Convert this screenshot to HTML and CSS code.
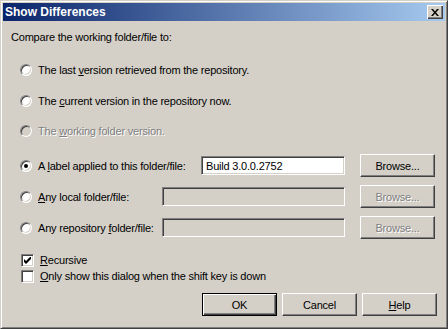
FILE: index.html
```html
<!DOCTYPE html>
<html lang="en">
<head>
    <meta charset="UTF-8">
    <title>Show Differences</title>
    <link rel="stylesheet" href="styles.css">
</head>
<body>
    <div class="window">
        <div class="titlebar">
            <span class="title">Show Differences</span>
            <span class="close">
                <svg width="8" height="7" viewBox="0 0 8 7"><path d="M0 0h2l2 2.5L6 0h2L5 3.5 8 7H6L4 4.5 2 7H0l3-3.5z" fill="#000"/></svg>
            </span>
        </div>
        <div class="content">
            <p class="intro">Compare the working folder/file to:</p>

            <div class="options">
                <div class="row">
                    <span class="radio"></span>
                    <span class="label">The last <u>v</u>ersion retrieved from the repository.</span>
                </div>
                <div class="row">
                    <span class="radio"></span>
                    <span class="label">The <u>c</u>urrent version in the repository now.</span>
                </div>
                <div class="row off gap-s">
                    <span class="radio"></span>
                    <span class="label">The <u>w</u>orking folder version.</span>
                </div>
                <div class="row gap-l">
                    <span class="radio checked"></span>
                    <span class="label">A <u>l</u>abel applied to this folder/file:</span>
                    <span class="field short">Build 3.0.0.2752</span>
                    <span class="btn">Browse...</span>
                </div>
                <div class="row">
                    <span class="radio"></span>
                    <span class="label"><u>A</u>ny local folder/file:</span>
                    <span class="field empty"></span>
                    <span class="btn disabled">Browse...</span>
                </div>
                <div class="row">
                    <span class="radio"></span>
                    <span class="label">Any repository <u>f</u>older/file:</span>
                    <span class="field empty"></span>
                    <span class="btn disabled">Browse...</span>
                </div>
            </div>

            <div class="checks">
                <div class="check-row">
                    <span class="box">
                        <svg width="7" height="7" viewBox="0 0 7 7"><path d="M0 2v3l2 2 5-5V-1L2 4z" fill="#000"/></svg>
                    </span>
                    <span><u>R</u>ecursive</span>
                </div>
                <div class="check-row">
                    <span class="box"></span>
                    <span><u>O</u>nly show this dialog when the shift key is down</span>
                </div>
            </div>

            <div class="actions">
                <span class="btn default">OK</span>
                <span class="btn">Cancel</span>
                <span class="btn"><u>H</u>elp</span>
            </div>
        </div>
    </div>
</body>
</html>
```

FILE: styles.css
```css
body {
    margin: 0;
    background: #d4d0c8;
    font-family: "Liberation Sans", Arial, sans-serif;
    font-size: 11px;
    letter-spacing: -0.2px;
    color: #000;
}
.window {
    width: 448px;
    height: 329px;
    box-sizing: border-box;
    padding: 2px;
    background: #d4d0c8;
    border: 1px solid;
    border-color: #d4d0c8 #404040 #404040 #d4d0c8;
    box-shadow: inset 1px 1px #fff, inset -1px -1px #808080;
}
.titlebar {
    height: 18px;
    display: flex;
    align-items: center;
    justify-content: space-between;
    padding: 0 2px;
    background: linear-gradient(to right, #0a246a, #a6caf0);
}
.title {
    color: #fff;
    font-weight: bold;
    font-size: 12px;
    letter-spacing: 0;
}
.close {
    width: 16px;
    height: 14px;
    box-sizing: border-box;
    display: flex;
    align-items: center;
    justify-content: center;
    background: #d4d0c8;
    box-shadow: inset 1px 1px #fff, inset -1px -1px #404040, inset -2px -2px #808080;
}
.content {
    padding: 10px 0 0 8px;
}
.intro {
    margin: 0;
    line-height: 13px;
}
.options {
    margin-top: 14px;
}
.row {
    height: 23px;
    display: flex;
    align-items: center;
    margin-top: 8px;
    padding-left: 9px;
    padding-right: 10px;
}
.row:first-child { margin-top: 0; }
.row.gap-s { margin-top: 7px; }
.row.gap-l { margin-top: 12px; }
.radio {
    width: 12px;
    height: 12px;
    box-sizing: border-box;
    border-radius: 50%;
    border: 1px solid;
    border-color: #808080 #fff #fff #808080;
    box-shadow: inset 1px 1px #404040, inset -1px -1px #d4d0c8;
    background: #fff;
    position: relative;
    flex: none;
}
.radio.checked::after {
    content: "";
    position: absolute;
    left: 3px;
    top: 3px;
    width: 4px;
    height: 4px;
    border-radius: 50%;
    background: #000;
}
.label {
    margin-left: 6px;
}
.off .radio { background: #d4d0c8; }
.off .label {
    color: #808080;
    text-shadow: 1px 1px #fff;
}
.field {
    margin-left: auto;
    height: 19px;
    box-sizing: border-box;
    padding: 3px 4px 0;
    border: 1px solid;
    border-color: #808080 #fff #fff #808080;
    box-shadow: inset 1px 1px #404040, inset -1px -1px #d4d0c8;
    background: #fff;
    line-height: 13px;
}
.field.short { width: 144px; }
.field.empty {
    width: 183px;
    background: #d4d0c8;
}
.btn {
    width: 75px;
    height: 23px;
    box-sizing: border-box;
    display: flex;
    align-items: center;
    justify-content: center;
    background: #d4d0c8;
    border: 1px solid;
    border-color: #fff #404040 #404040 #fff;
    box-shadow: inset -1px -1px #808080;
    flex: none;
}
.row .btn { margin-left: 15px; }
.btn.disabled {
    color: #808080;
    text-shadow: 1px 1px #fff;
}
.btn.default {
    border: 1px solid #000;
    box-shadow: inset 1px 1px #fff, inset -1px -1px #404040, inset -2px -2px #808080;
}
.checks {
    margin-top: 13px;
    padding-left: 10px;
}
.check-row {
    height: 16px;
    display: flex;
    align-items: center;
}
.box {
    width: 13px;
    height: 13px;
    box-sizing: border-box;
    display: flex;
    align-items: center;
    justify-content: center;
    border: 1px solid;
    border-color: #808080 #fff #fff #808080;
    box-shadow: inset 1px 1px #404040, inset -1px -1px #d4d0c8;
    background: #fff;
    margin-right: 6px;
}
.actions {
    display: flex;
    justify-content: flex-end;
    gap: 5px;
    margin-top: 9px;
    padding-right: 8px;
}
```
